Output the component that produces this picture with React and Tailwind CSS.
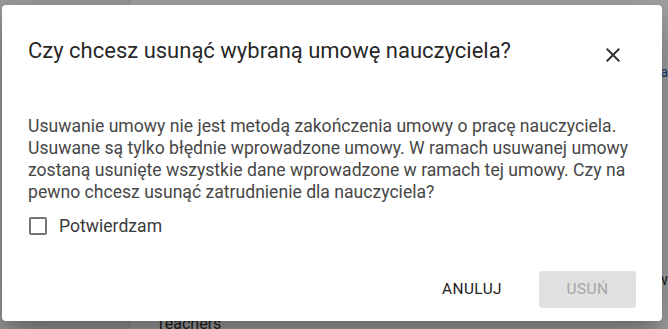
import React, { useState } from "react";

const font = { fontFamily: "Roboto, 'Noto Sans', Arial, sans-serif" };

function CloseIcon() {
  return (
    <svg viewBox="0 0 24 24" className="w-6 h-6" fill="currentColor">
      <path d="M19 6.41L17.59 5 12 10.59 6.41 5 5 6.41 10.59 12 5 17.59 6.41 19 12 13.41 17.59 19 19 17.59 13.41 12z" />
    </svg>
  );
}

function BoxIcon({ checked }) {
  return (
    <svg viewBox="0 0 24 24" className="w-6 h-6" fill="currentColor">
      {checked ? (
        <path d="M19 3H5c-1.11 0-2 .9-2 2v14c0 1.1.89 2 2 2h14c1.11 0 2-.9 2-2V5c0-1.1-.89-2-2-2zm-9 14l-5-5 1.41-1.41L10 14.17l7.59-7.59L19 8l-9 9z" />
      ) : (
        <path d="M19 5v14H5V5h14m0-2H5c-1.1 0-2 .9-2 2v14c0 1.1.9 2 2 2h14c1.1 0 2-.9 2-2V5c0-1.1-.9-2-2-2z" />
      )}
    </svg>
  );
}

export default function App() {
  const [confirmed, setConfirmed] = useState(false);

  return (
    <div className="relative w-[668px] h-[329px] overflow-hidden bg-white" style={font}>
      {/* page behind the dialog */}
      <div className="flex h-full">
        <div className="w-[130px] bg-[#f3f3f3] border-r border-[#e0e0e0]"></div>
        <div className="flex-1 flex flex-col">
          <div className="h-[62px]"></div>
          <div className="flex justify-end text-sm leading-5 text-[#1e5aa8]">
            <span>a</span>
          </div>
          <div className="flex-1"></div>
          <div className="flex justify-end text-base leading-5 text-[#333]">
            <span>w</span>
          </div>
          <div className="h-[24px]"></div>
          <div className="pl-[26px] text-base text-[#333] leading-5 h-[15px]">Teachers</div>
        </div>
      </div>

      <div className="absolute inset-0 bg-black/[0.36]"></div>

      {/* dialog */}
      <div className="absolute left-[2px] top-[5px] w-[660px] h-[316px] bg-white rounded flex flex-col shadow-[0_11px_15px_-7px_rgba(0,0,0,0.2),0_24px_38px_3px_rgba(0,0,0,0.14),0_9px_46px_8px_rgba(0,0,0,0.12)]">
        <div className="flex items-start justify-between pl-[26px] pr-[37px] pt-[30px]">
          <h2 className="text-[22px] leading-8 font-normal text-black/[0.87]">
            Czy chcesz usunąć wybraną umowę nauczyciela?
          </h2>
          <button className="mt-[8px] text-black/[0.8]">
            <CloseIcon />
          </button>
        </div>

        <div className="pl-[26px] pr-[26px] pt-[48px]">
          <p className="text-[17.6px] leading-[22px] text-[#474747]">
            Usuwanie umowy nie jest metodą zakończenia umowy o pracę nauczyciela. Usuwane są tylko błędnie
            wprowadzone umowy. W ramach usuwanej umowy zostaną usunięte wszystkie dane wprowadzone w ramach tej
            umowy. Czy na pewno chcesz usunąć zatrudnienie dla nauczyciela?
          </p>
          <label className="flex items-center gap-[9px] mt-[11px] -ml-[2px] cursor-pointer">
            <input
              type="checkbox"
              className="hidden"
              checked={confirmed}
              onChange={(e) => setConfirmed(e.target.checked)}
            />
            <span className={confirmed ? "text-[#1976d2]" : "text-[#757575]"}>
              <BoxIcon checked={confirmed} />
            </span>
            <span className="text-[17.6px] leading-6 text-[#3a3a3a]">Potwierdzam</span>
          </label>
        </div>

        <div className="mt-auto flex justify-end items-center gap-[29px] pr-[26px] pb-[13px]">
          <button className="px-2 h-[37px] text-[15.4px] font-normal tracking-[0.02857em] uppercase text-[#222]">
            Anuluj
          </button>
          <button
            disabled={!confirmed}
            className={
              confirmed
                ? "w-[97px] h-[37px] rounded text-[15.4px] font-normal tracking-[0.02857em] uppercase bg-[#d32f2f] text-white"
                : "w-[97px] h-[37px] rounded text-[15.4px] font-normal tracking-[0.02857em] uppercase bg-[#e0e0e0] text-[#a6a6a6]"
            }
          >
            Usuń
          </button>
        </div>
      </div>
    </div>
  );
}
